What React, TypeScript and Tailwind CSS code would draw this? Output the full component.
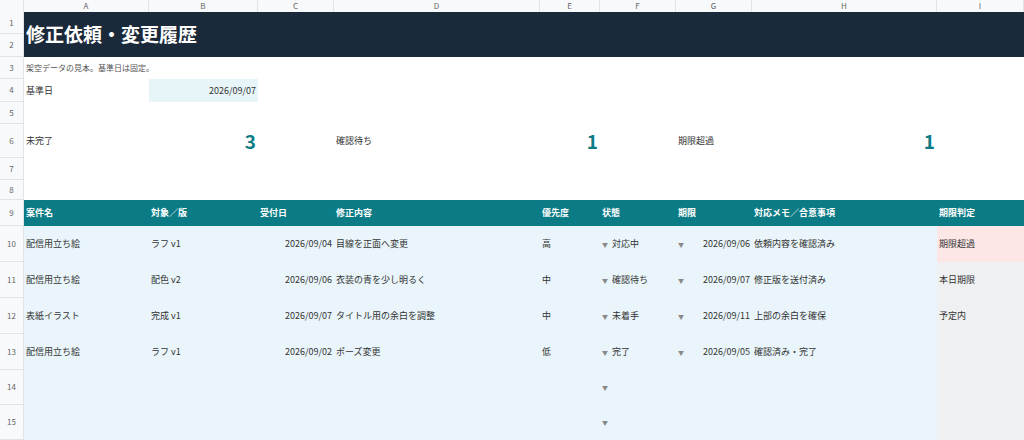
const cols = 'grid-cols-[24px_125px_109px_76px_206px_60px_76px_76px_185px_87px]'
const letters = ['A', 'B', 'C', 'D', 'E', 'F', 'G', 'H', 'I']

const rows = [
  ['配信用立ち絵', 'ラフ v1', '2026/09/04', '目線を正面へ変更', '高', '対応中', '2026/09/06', '依頼内容を確認済み', '期限超過'],
  ['配信用立ち絵', '配色 v2', '2026/09/06', '衣装の青を少し明るく', '中', '確認待ち', '2026/09/07', '修正版を送付済み', '本日期限'],
  ['表紙イラスト', '完成 v1', '2026/09/07', 'タイトル用の余白を調整', '中', '未着手', '2026/09/11', '上部の余白を確保', '予定内'],
  ['配信用立ち絵', 'ラフ v1', '2026/09/02', 'ポーズ変更', '低', '完了', '2026/09/05', '確認済み・完了', ''],
  ['', '', '', '', '', '', '', '', ''],
  ['', '', '', '', '', '', '', '', ''],
]

function Num({ n, h }: { n: number; h: string }) {
  return (
    <div className={`${h} flex items-center justify-center bg-[#f8f9fa] border-r border-b border-[#e2e3e3] text-[8px] text-[#666]`}>
      {n}
    </div>
  )
}

export default function App() {
  return (
    <div className="w-[1024px] h-[440px] overflow-hidden bg-white text-[9px] text-[#333]" style={{ fontFamily: '"Noto Sans CJK JP", "Noto Sans", sans-serif' }}>
      <div className={`grid ${cols} h-[12px] bg-[#f8f9fa] text-[8px] text-[#666]`}>
        <div className="border-r border-b border-[#e2e3e3]" />
        {letters.map((l) => (
          <div key={l} className="flex items-center justify-center border-r border-b border-[#e2e3e3]">{l}</div>
        ))}
      </div>
      <div className={`grid ${cols}`}>
        <div><Num n={1} h="h-[22px]" /><Num n={2} h="h-[23px]" /></div>
        <div className="col-span-9 bg-[#1b2a3a] text-white text-[19px] font-bold flex items-center pl-[2px]">修正依頼・変更履歴</div>

        <Num n={3} h="h-[22px]" />
        <div className="col-span-9 flex items-center pl-[2px] text-[8px] text-[#555]">架空データの見本。基準日は固定。</div>

        <Num n={4} h="h-[23px]" />
        <div className="flex items-center pl-[2px]">基準日</div>
        <div className="flex items-center justify-end pr-[2px] bg-[#e8f5f8]">2026/09/07</div>
        <div className="col-span-7" />

        <Num n={5} h="h-[22px]" />
        <div className="col-span-9" />

        <Num n={6} h="h-[34px]" />
        <div className="col-span-2 flex items-center justify-between px-[2px]">
          <span>未完了</span>
          <span className="text-[19px] font-semibold text-[#0e7c86]">3</span>
        </div>
        <div />
        <div className="col-span-2 flex items-center justify-between px-[2px]">
          <span>確認待ち</span>
          <span className="text-[19px] font-semibold text-[#0e7c86]">1</span>
        </div>
        <div />
        <div className="col-span-2 flex items-center justify-between px-[2px]">
          <span>期限超過</span>
          <span className="text-[19px] font-semibold text-[#0e7c86]">1</span>
        </div>
        <div />

        <Num n={7} h="h-[22px]" />
        <div className="col-span-9" />
        <Num n={8} h="h-[20px]" />
        <div className="col-span-9" />

        <Num n={9} h="h-[26px]" />
        {['案件名', '対象／版', '受付日', '修正内容', '優先度', '状態', '期限', '対応メモ／合意事項', '期限判定'].map((t) => (
          <div key={t} className="bg-[#0b7b86] text-white font-bold flex items-center pl-[2px] whitespace-nowrap">{t}</div>
        ))}

        {rows.map((r, i) => {
          const h = i >= 4 ? 'h-[35px]' : 'h-[36px]'
          const judge = i === 0 ? 'bg-[#fde6e6]' : 'bg-[#eef0f2]'
          return [
            <Num key={`n${i}`} n={10 + i} h={h} />,
            <div key={`a${i}`} className="bg-[#e9f5fa] flex items-center pl-[2px] whitespace-nowrap">{r[0]}</div>,
            <div key={`b${i}`} className="bg-[#e9f5fa] flex items-center pl-[2px] whitespace-nowrap">{r[1]}</div>,
            <div key={`c${i}`} className="bg-[#e9f5fa] flex items-center justify-end pr-[2px] whitespace-nowrap">{r[2]}</div>,
            <div key={`d${i}`} className="bg-[#e9f5fa] flex items-center pl-[2px] whitespace-nowrap">{r[3]}</div>,
            <div key={`e${i}`} className="bg-[#e9f5fa] flex items-center pl-[2px]">{r[4]}</div>,
            <div key={`f${i}`} className="bg-[#e9f5fa] flex items-center pl-[2px] gap-[4px] whitespace-nowrap">
              <span className="text-[6px] text-[#888]">▼</span>{r[5]}
            </div>,
            <div key={`g${i}`} className="bg-[#e9f5fa] flex items-center justify-between px-[2px] whitespace-nowrap">
              <span className="text-[6px] text-[#888]">{i >= 4 ? '' : '▼'}</span>{r[6]}
            </div>,
            <div key={`h${i}`} className="bg-[#e9f5fa] flex items-center pl-[2px] whitespace-nowrap">{r[7]}</div>,
            <div key={`i${i}`} className={`${judge} flex items-center pl-[2px]`}>{r[8]}</div>,
          ]
        })}
      </div>
    </div>
  )
}
